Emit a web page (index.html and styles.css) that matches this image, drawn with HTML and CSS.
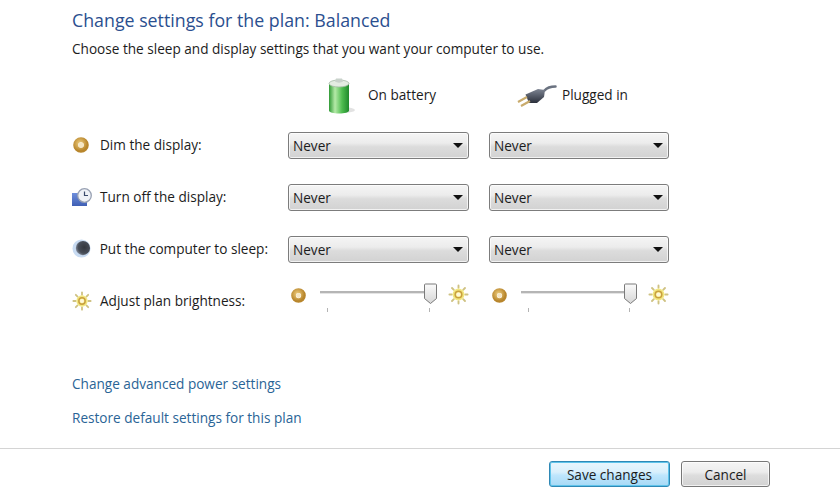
FILE: index.html
```html
<!DOCTYPE html>
<html lang="en">
<head>
  <meta charset="UTF-8">
  <title>Edit Plan Settings</title>
  <link rel="stylesheet" href="styles.css">
</head>
<body>

<svg class="defs" width="0" height="0">
  <defs>
    <radialGradient id="ringGold" cx="40%" cy="35%" r="70%">
      <stop offset="0" stop-color="#f0cf80"/>
      <stop offset="1" stop-color="#b8862c"/>
    </radialGradient>
    <linearGradient id="battGreen" x1="0" x2="1" y1="0" y2="0">
      <stop offset="0" stop-color="#2f9a35"/>
      <stop offset="0.3" stop-color="#b5eaa8"/>
      <stop offset="0.65" stop-color="#4fbd50"/>
      <stop offset="1" stop-color="#1f8a2c"/>
    </linearGradient>
    <linearGradient id="plugBody" x1="0" x2="0" y1="0" y2="1">
      <stop offset="0" stop-color="#7d8492"/>
      <stop offset="1" stop-color="#2b303c"/>
    </linearGradient>
    <linearGradient id="screenBlue" x1="0" x2="0" y1="0" y2="1">
      <stop offset="0" stop-color="#6f8fdc"/>
      <stop offset="1" stop-color="#3f5fb4"/>
    </linearGradient>
    <linearGradient id="thumbFill" x1="0" x2="0" y1="0" y2="1">
      <stop offset="0" stop-color="#fbfbfb"/>
      <stop offset="1" stop-color="#d6d6d6"/>
    </linearGradient>
    <radialGradient id="moonShade" cx="60%" cy="45%" r="60%">
      <stop offset="0" stop-color="#33373f"/>
      <stop offset="0.7" stop-color="#474d58"/>
      <stop offset="1" stop-color="#7d8594"/>
    </radialGradient>
    <symbol id="dim" viewBox="0 0 16 16">
      <circle cx="8" cy="8" r="5.300" fill="none" stroke="url(#ringGold)" stroke-width="5"/>
      <circle cx="8" cy="8" r="2.600" fill="#f6e7c4"/>
    </symbol>
    <symbol id="sun" viewBox="0 0 22 22">
      <g stroke="#cfc283" stroke-width="2" stroke-linecap="round">
        <path d="M11 1.500v2.500M11 18v2.500M1.500 11H4M18 11h2.500M4.200 4.200l1.900 1.900M15.900 15.900l1.900 1.900M4.200 17.800l1.900-1.900M15.900 6.100l1.900-1.900"/>
      </g>
      <circle cx="11" cy="11" r="6.200" fill="#f2e77f"/>
      <circle cx="11" cy="11" r="3.500" fill="none" stroke="#c9a040" stroke-width="1.600"/>
      <circle cx="11" cy="11" r="2.200" fill="#fff8dc"/>
    </symbol>
    <symbol id="thumb" viewBox="0 0 13 22">
      <path d="M1.500 1h10a1 1 0 0 1 1 1v13.500L6.500 20.500.5 15.500V2a1 1 0 0 1 1-1z" fill="url(#thumbFill)" stroke="#7a7a7a"/>
    </symbol>
  </defs>
</svg>

<main class="page">
  <h1 class="title">Change settings for the plan: Balanced</h1>
  <p class="intro">Choose the sleep and display settings that you want your computer to use.</p>

  <div class="grid">
    <div class="head-spacer"></div>
    <div class="col-head battery-head">
      <svg viewBox="0 0 30 38" width="30" height="38">
        <ellipse cx="17" cy="33" rx="12" ry="3" fill="#e2e2e2"/>
        <path d="M3 6.500h20v27c0 2-4.500 3-10 3s-10-1-10-3z" fill="url(#battGreen)"/>
        <ellipse cx="13" cy="6.500" rx="10" ry="3.500" fill="#e4ece2" stroke="#a6bba7" stroke-width=".8"/>
        <path d="M9 4.500l1-3h6l1 3c-2 1.500-6 1.500-8 0z" fill="#c9d2cb"/>
      </svg>
      <span>On battery</span>
    </div>
    <div class="col-head plug-head">
      <svg viewBox="0 0 40 22" width="40" height="22">
        <path d="M38.500 1.500c-5 0-8 .5-11 4" fill="none" stroke="#6a7280" stroke-width="2.500" stroke-linecap="round"/>
        <path d="M8.500 9.500 21 4l7 1-1 7-7 6h-8z" fill="url(#plugBody)"/>
        <path d="M10 12 1 17M13 16l-9 5" stroke="#c9ab6c" stroke-width="2.200"/>
      </svg>
      <span>Plugged in</span>
    </div>

    <div class="row-label">
      <span class="row-icon"><svg class="dim-icon" viewBox="0 0 16 16" width="16" height="16"><use href="#dim"/></svg></span>
      <span>Dim the display:</span>
    </div>
    <div class="dropdown"><span>Never</span><i class="arrow"></i></div>
    <div class="dropdown"><span>Never</span><i class="arrow"></i></div>

    <div class="row-label">
      <span class="row-icon">
        <svg viewBox="0 0 20 18" width="20" height="18">
          <path d="M0 5h15v13H0z" fill="url(#screenBlue)"/>
          <circle cx="12.500" cy="7.500" r="6.800" fill="#eef1f6" stroke="#98a1b3" stroke-width="1.300"/>
          <path d="M12.500 3.500v4h3.500" fill="none" stroke="#3a4a6b" stroke-width="1.200"/>
        </svg>
      </span>
      <span>Turn off the display:</span>
    </div>
    <div class="dropdown"><span>Never</span><i class="arrow"></i></div>
    <div class="dropdown"><span>Never</span><i class="arrow"></i></div>

    <div class="row-label">
      <span class="row-icon">
        <svg viewBox="0 0 20 20" width="19" height="19">
          <circle cx="10" cy="10" r="9.500" fill="#c8dbf2"/>
          <circle cx="11.500" cy="9.500" r="7.500" fill="url(#moonShade)"/>
        </svg>
      </span>
      <span>Put the computer to sleep:</span>
    </div>
    <div class="dropdown"><span>Never</span><i class="arrow"></i></div>
    <div class="dropdown"><span>Never</span><i class="arrow"></i></div>

    <div class="row-label">
      <span class="row-icon"><svg viewBox="0 0 22 22" width="20" height="20"><use href="#sun"/></svg></span>
      <span>Adjust plan brightness:</span>
    </div>
    <div class="brightness">
      <svg class="low" viewBox="0 0 16 16" width="15" height="15"><use href="#dim"/></svg>
      <div class="slider">
        <div class="track"></div>
        <svg class="thumb" viewBox="0 0 13 22" width="13" height="22"><use href="#thumb"/></svg>
        <div class="ticks"><i></i><i></i></div>
      </div>
      <svg class="high" viewBox="0 0 22 22" width="21" height="21"><use href="#sun"/></svg>
    </div>
    <div class="brightness">
      <svg class="low" viewBox="0 0 16 16" width="15" height="15"><use href="#dim"/></svg>
      <div class="slider">
        <div class="track"></div>
        <svg class="thumb" viewBox="0 0 13 22" width="13" height="22"><use href="#thumb"/></svg>
        <div class="ticks"><i></i><i></i></div>
      </div>
      <svg class="high" viewBox="0 0 22 22" width="21" height="21"><use href="#sun"/></svg>
    </div>
  </div>

  <div class="links">
    <a href="#">Change advanced power settings</a>
    <a href="#">Restore default settings for this plan</a>
  </div>
</main>

<footer class="footer">
  <button class="btn btn-primary">Save changes</button>
  <button class="btn">Cancel</button>
</footer>

</body>
</html>
```
FILE: styles.css
```css
html, body {
  height: 100%;
}
body {
  margin: 0;
  background: #fff;
  color: #1c1c1c;
  font-family: "Open Sans", "Noto Sans", sans-serif;
  font-size: 13.6px;
  overflow: hidden;
}
.defs {
  display: block;
  height: 0;
}
.page {
  padding: 7px 0 0 72px;
  height: 448px;
  box-sizing: border-box;
}
.title {
  margin: 0;
  font-size: 17.8px;
  line-height: 26px;
  font-weight: 400;
  color: #2b4f8f;
}
.intro {
  margin: 6px 0 0;
  font-size: 13.6px;
  line-height: 20px;
}
.grid {
  display: grid;
  grid-template-columns: 196px 181px 180px;
  column-gap: 20px;
  grid-template-rows: 73px 52px 52px 52px 27px;
}
.col-head {
  display: flex;
  align-items: center;
}
.col-head span {
  margin-bottom: 3px;
}
.battery-head {
  padding-left: 38px;
  gap: 12px;
}
.plug-head {
  padding-left: 28px;
  gap: 5px;
}
.row-label {
  display: flex;
  align-items: center;
  gap: 8px;
  height: 25px;
  white-space: nowrap;
}
.row-icon {
  width: 20px;
  display: flex;
}
.dim-icon {
  margin-left: 1px;
}
.dropdown {
  display: flex;
  align-items: center;
  justify-content: space-between;
  height: 27px;
  padding: 0 4px 1px;
  border: 1px solid #7c7c7c;
  border-radius: 3px;
  background: linear-gradient(#f5f5f5 0, #ececec 40%, #dcdcdc 55%, #d2d2d2 100%);
  box-shadow: inset 0 0 0 1px rgba(255, 255, 255, .7);
  box-sizing: border-box;
}
.arrow {
  width: 0;
  height: 0;
  margin-right: 1px;
  border-left: 5px solid transparent;
  border-right: 5px solid transparent;
  border-top: 5px solid #111;
}
.brightness {
  display: flex;
  align-items: flex-start;
  margin-top: -5px;
  padding-left: 3px;
}
.brightness svg {
  flex: none;
}
.brightness .low {
  margin-top: 5px;
}
.brightness .high {
  margin: 1px 0 0 12px;
}
.slider {
  position: relative;
  width: 118px;
  height: 30px;
  margin-left: 14px;
}
.track {
  margin-top: 8px;
  height: 2px;
  background: #b5b5b5;
  border-bottom: 1px solid #e4e4e4;
}
.thumb {
  position: absolute;
  right: -1px;
  top: 0;
}
.ticks {
  display: flex;
  justify-content: space-between;
  margin: 14px 6px 0 7px;
}
.ticks i {
  width: 1px;
  height: 4px;
  background: #b4b4b4;
}
.links {
  display: flex;
  flex-direction: column;
  gap: 14px;
  margin-top: 59px;
}
.links a {
  color: #2a6496;
  text-decoration: none;
  line-height: 20px;
}
.footer {
  border-top: 1px solid #d4d4d4;
  height: 48px;
  box-sizing: border-box;
  display: flex;
  justify-content: flex-end;
  align-items: flex-start;
  gap: 11px;
  padding: 12px 70px 0 0;
}
.btn {
  width: 89px;
  height: 26px;
  padding: 0;
  border: 1px solid #777;
  border-radius: 3px;
  background: linear-gradient(#f5f5f5 0, #ececec 42%, #dddddd 55%, #d2d2d2 100%);
  box-shadow: inset 0 0 0 1px rgba(255, 255, 255, .7);
  color: #1c1c1c;
  font-family: inherit;
  font-size: 13.6px;
}
.btn-primary {
  width: 121px;
  border-color: #2f88b5;
  background: linear-gradient(#eaf6fd 0, #d9f0fc 42%, #bee6fd 55%, #a7d9f5 100%);
  box-shadow: inset 0 0 0 1px #5fc4ea;
}
```
